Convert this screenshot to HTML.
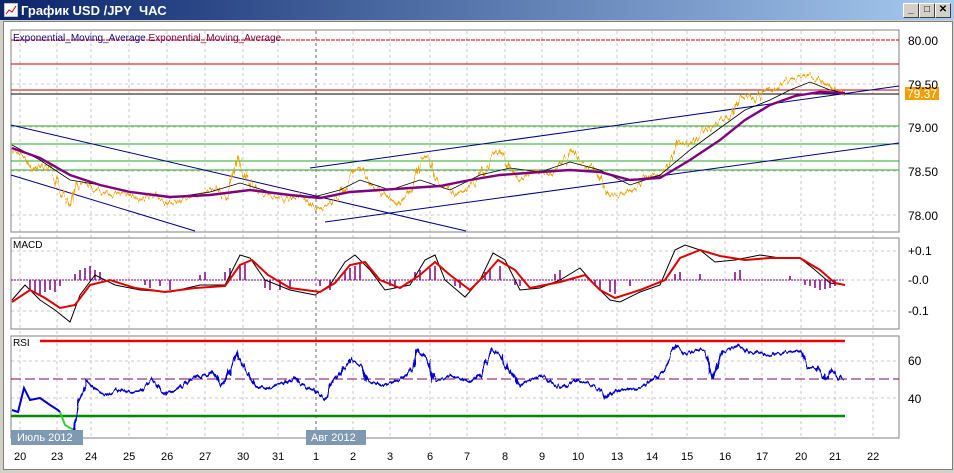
<!DOCTYPE html><html><head><meta charset="utf-8"><style>
body{margin:0;width:954px;height:473px;overflow:hidden;background:#d4d0c8;font-family:"Liberation Sans",sans-serif}
#t{position:absolute;left:0;top:0;width:954px;height:20px;background:linear-gradient(90deg,#0a246a,#a6caf0);color:#fff;font-weight:bold;font-size:13px}
.b{position:absolute;top:3px;width:14px;height:13px;background:#d4d0c8;border:1px solid;border-color:#fff #404040 #404040 #fff;font-size:10px;color:#000;text-align:center;line-height:12px}
#w{position:absolute;left:3px;top:21px;width:948px;height:447px;background:#fff;border:1px solid #808080}
svg text{font-family:"Liberation Sans",sans-serif}
</style></head><body>
<div id="t"><svg width="14" height="14" style="position:absolute;left:4px;top:3px"><rect width="14" height="14" fill="#fff" stroke="#888"/><polyline points="2,11 5,7 8,9 12,3" stroke="#c00" fill="none"/></svg><span style="position:absolute;left:21px;top:3px">График USD /JPY&nbsp; ЧАС</span>
<div class="b" style="left:903px">_</div><div class="b" style="left:919px">□</div><div class="b" style="left:935px">✕</div></div>
<div id="w"></div>
<svg width="954" height="473" style="position:absolute;left:0;top:0">
<defs>
<filter id="j" x="-5%" y="-20%" width="110%" height="140%"><feTurbulence type="fractalNoise" baseFrequency="0.35 0.02" numOctaves="2" seed="3"/><feDisplacementMap in="SourceGraphic" scale="14" xChannelSelector="R" yChannelSelector="G"/></filter>
<filter id="k" x="-5%" y="-20%" width="110%" height="140%"><feTurbulence type="fractalNoise" baseFrequency="0.3 0.05" numOctaves="2" seed="7"/><feDisplacementMap in="SourceGraphic" scale="8" xChannelSelector="R" yChannelSelector="G"/></filter>
</defs>
<g stroke="#c8c8c8" stroke-dasharray="3,3" stroke-width="1">
<path d="M20 31V438M57 31V438M91 31V438M129 31V438M167 31V438M205 31V438M243 31V438M278 31V438M353 31V438M390 31V438M430 31V438M467 31V438M505 31V438M542 31V438M578 31V438M617 31V438M652 31V438M687 31V438M725 31V438M762 31V438M801 31V438M835 31V438M873 31V438"/>
<path d="M11 84H899M11 127H899M11 171H899M11 215H899M11 251H899M11 280H899M11 311H899M11 361H899M11 398H899"/>
</g>
<path d="M316 31V438" stroke="#666" stroke-dasharray="3,3"/>
<rect x="11" y="30" width="888" height="202" fill="none" stroke="#808080"/>
<rect x="11" y="238" width="888" height="91" fill="none" stroke="#808080"/>
<rect x="11" y="336" width="888" height="102" fill="none" stroke="#808080"/>
<path d="M11 40H899" stroke="#c00" stroke-dasharray="4,1"/>
<path d="M11 64H899M11 90H899" stroke="#c00"/>
<path d="M11 94H899" stroke="#000"/>
<path d="M11 126H899M11 144H899M11 161H899M11 170H899" stroke="#2a2"/>
<g stroke="#00008b" fill="none">
<path d="M11 125L466 231M11 175L195 231M310 168L899 86M325 222L899 143"/>
</g>
<polyline filter="url(#j)" fill="none" stroke="#f0a000" stroke-width="1.6" points="12,150 25,158 35,170 45,165 55,180 62,195 70,205 75,190 82,180 95,190 110,195 125,192 140,200 155,195 170,205 185,198 200,195 215,188 228,200 235,165 240,155 245,175 255,190 270,195 285,200 300,195 312,205 320,210 328,205 340,195 350,175 360,170 370,185 385,195 398,205 410,190 420,160 428,155 435,180 445,185 455,195 465,190 480,175 492,155 500,150 510,170 520,180 535,170 550,175 565,160 572,150 580,165 590,165 600,180 610,195 620,195 632,190 645,180 660,175 670,165 678,140 690,145 700,135 712,125 722,120 732,115 738,100 745,95 755,100 765,90 775,88 785,80 795,78 800,75 805,72 815,78 825,85 835,90 845,92"/>
<polyline fill="none" stroke="#000" stroke-width="0.8" points="12,145 40,160 70,180 100,185 130,192 170,198 210,192 240,183 270,192 310,198 340,190 360,180 390,190 420,180 450,190 480,175 510,168 540,172 570,162 600,170 630,185 660,175 690,150 720,128 745,110 770,100 790,90 810,82 830,90 845,93"/>
<polyline fill="none" stroke="#800080" stroke-width="2.4" points="12,148 40,158 70,175 100,185 130,192 170,197 210,195 250,190 290,195 320,198 350,192 380,190 410,188 440,186 470,180 500,175 540,172 570,170 600,172 630,180 660,178 690,160 720,140 745,120 770,105 795,96 820,92 845,93"/>
<rect x="905" y="87" width="34" height="13" fill="#f0a000"/>
<g font-size="12" fill="#000"><text x="908" y="45">80.00</text><text x="908" y="89">79.50</text><text x="908" y="132">79.00</text><text x="908" y="176">78.50</text><text x="908" y="220">78.00</text>
<text x="908" y="255">+0.1</text><text x="908" y="284">-0.0</text><text x="908" y="315">-0.1</text>
<text x="908" y="365">60</text><text x="908" y="403">40</text></g>
<text x="907" y="98" font-size="12" fill="#fff">79.37</text>
<text x="13" y="41" font-size="10" fill="#1a0080">Exponential_Moving_Average <tspan fill="#800040">Exponential_Moving_Average</tspan></text>
<path d="M11 280H845" stroke="#800080" stroke-dasharray="2,1"/>
<g stroke="#800080" stroke-width="1.5"><path d="M30 280v10M35 280v12M40 280v15M45 280v12M50 280v10M55 280v12M60 280v6M75 280v-6M80 280v-10M85 280v-12M90 280v-14M95 280v-10M100 280v-8M145 280v5M150 280v8M160 280v6M170 280v10M200 280v-5M205 280v-8M225 280v-8M230 280v-12M240 280v-14M245 280v-16M265 280v8M270 280v10M280 280v10M290 280v8M320 280v6M330 280v10M345 280v-8M350 280v-12M355 280v-14M360 280v-16M390 280v6M395 280v8M415 280v-8M420 280v-10M430 280v-12M435 280v-14M455 280v6M460 280v8M485 280v-8M490 280v-12M500 280v-14M515 280v5M520 280v6M555 280v-6M560 280v-10M595 280v6M600 280v10M610 280v12M615 280v14M630 280v6M675 280v-6M680 280v-8M700 280v-6M735 280v-8M740 280v-10M790 280v-4M805 280v5M810 280v6M815 280v8M820 280v10M825 280v9M830 280v8M835 280v6"/></g>
<polyline fill="none" stroke="#000" points="12,300 25,285 40,300 55,310 70,322 80,295 95,275 115,285 140,290 170,292 200,285 225,285 240,255 250,258 265,280 290,290 315,295 330,285 345,262 355,255 370,270 385,290 410,285 425,260 435,255 445,280 465,297 480,280 493,253 505,260 520,290 540,288 560,280 580,268 595,285 610,300 620,302 640,292 660,285 675,250 685,245 700,250 715,262 735,260 760,255 780,258 800,258 815,270 830,283 845,285"/>
<polyline fill="none" stroke="#e00000" stroke-width="2" points="12,302 30,290 45,298 60,308 75,305 90,285 110,280 135,288 165,292 195,288 225,286 240,265 252,260 268,275 290,288 320,292 335,283 350,265 365,262 380,280 400,288 420,275 435,262 450,275 470,290 485,275 498,260 515,270 530,288 560,282 585,275 600,290 615,298 640,290 665,280 680,258 700,250 720,256 745,260 770,258 800,258 820,270 835,283 845,285"/>
<text x="13" y="248" font-size="10" fill="#000">MACD</text>
<path d="M40 341H845" stroke="#e00" stroke-width="2.5"/>
<path d="M11 416H845" stroke="#080" stroke-width="2.5"/>
<path d="M11 379H899" stroke="#800060" stroke-dasharray="10,4"/>
<text x="13" y="346" font-size="10" fill="#000">RSI</text>
<polyline fill="none" stroke="#0000d0" stroke-width="2" points="12,410 18,412 24,388 30,400 40,398 50,405 58,410 60,412"/>
<polyline fill="none" stroke="#30d030" stroke-width="2" points="60,412 65,425 70,428 75,430"/>
<polyline filter="url(#k)" fill="none" stroke="#0000d0" stroke-width="2" points="75,430 78,405 85,380 95,390 105,395 115,390 125,392 140,390 152,380 165,395 180,388 192,378 205,376 212,372 222,385 230,372 236,352 245,370 255,385 270,388 285,382 296,378 300,385 315,390 325,400 332,382 343,370 350,360 360,365 368,382 385,385 400,380 410,372 418,350 428,360 435,382 450,375 470,382 480,375 492,350 500,355 510,372 520,385 540,375 560,388 575,380 590,385 600,390 605,398 620,390 640,388 655,378 665,372 675,345 685,355 695,350 705,350 712,378 722,352 738,345 750,352 770,355 790,352 800,350 808,368 818,368 825,380 832,370 838,378 845,380"/>
<rect x="11" y="430" width="72" height="15" fill="#7f9ab0"/><text x="17" y="441" font-size="11" fill="#fff">Июль 2012</text>
<rect x="306" y="430" width="60" height="15" fill="#7f9ab0"/><text x="311" y="441" font-size="11" fill="#fff">Авг 2012</text>
<g font-size="11" fill="#000"><text x="14" y="460">20</text><text x="51" y="460">23</text><text x="85" y="460">24</text><text x="123" y="460">25</text><text x="161" y="460">26</text><text x="199" y="460">27</text><text x="237" y="460">30</text><text x="272" y="460">31</text><text x="313" y="460">1</text><text x="350" y="460">2</text><text x="387" y="460">3</text><text x="427" y="460">6</text><text x="464" y="460">7</text><text x="502" y="460">8</text><text x="539" y="460">9</text><text x="572" y="460">10</text><text x="611" y="460">13</text><text x="646" y="460">14</text><text x="681" y="460">15</text><text x="719" y="460">16</text><text x="756" y="460">17</text><text x="795" y="460">20</text><text x="829" y="460">21</text><text x="867" y="460">22</text></g>
</svg>
</body></html>
